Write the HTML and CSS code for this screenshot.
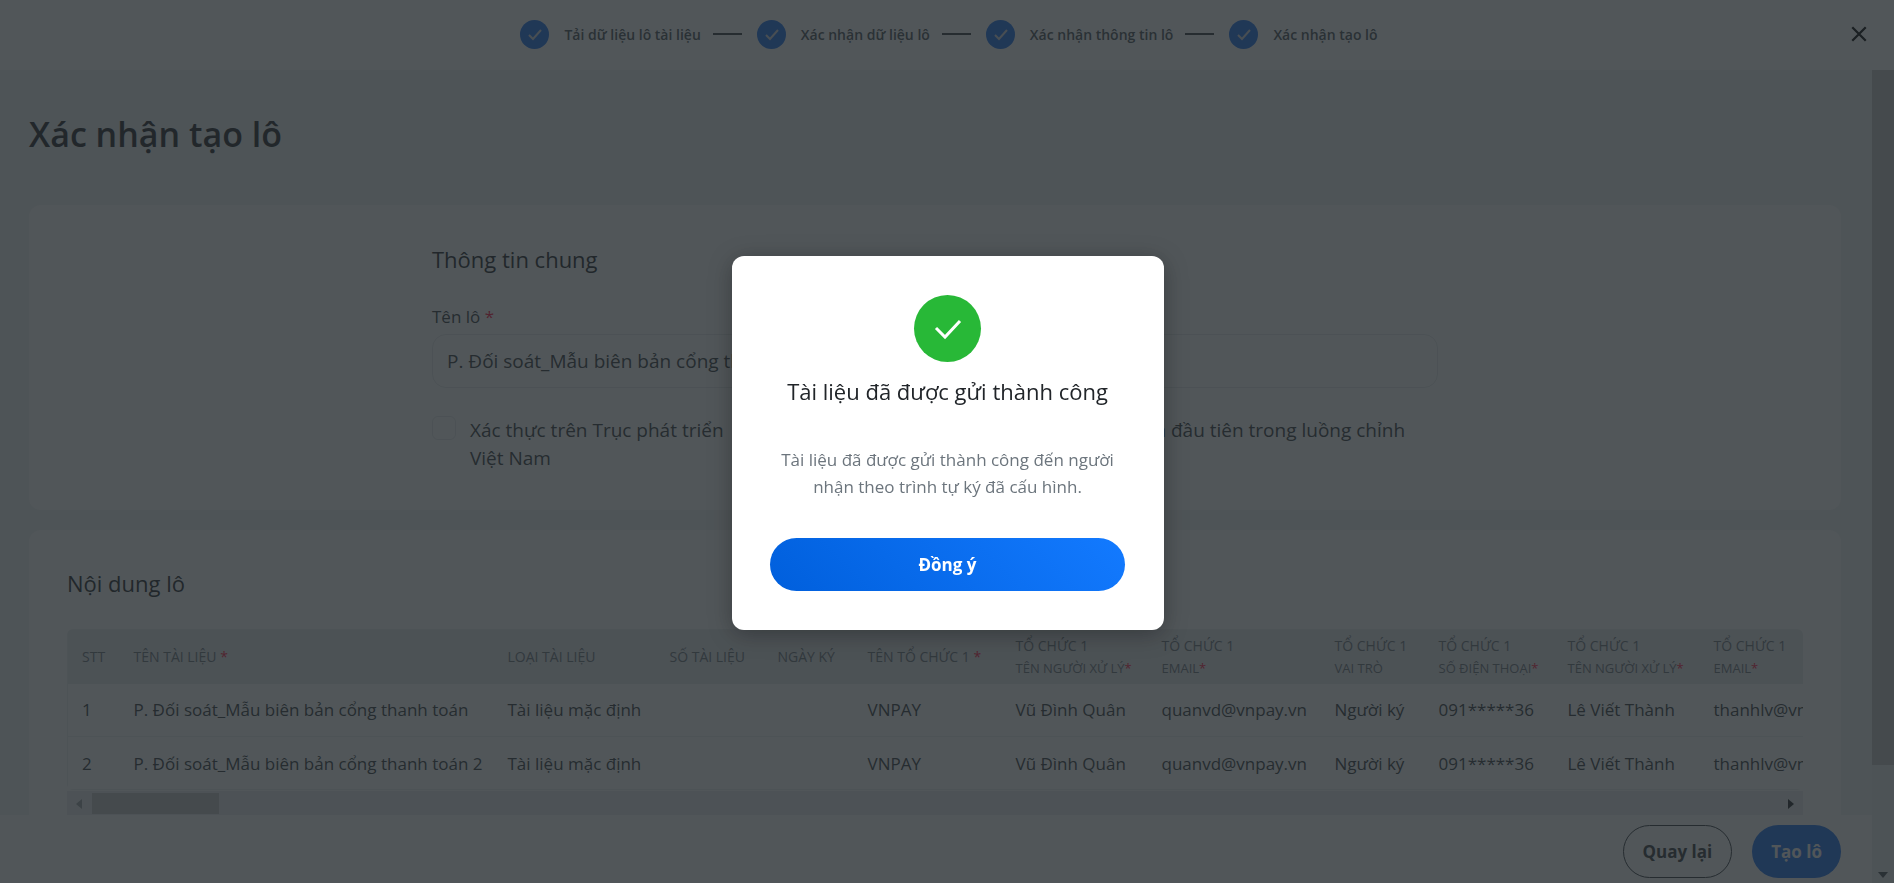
FILE: index.html
```html
<!DOCTYPE html>
<html lang="vi">
<head>
<meta charset="utf-8">
<title>Xác nhận tạo lô</title>
<link rel="stylesheet" href="styles.css">
</head>
<body>
<div class="app">
  <header class="topbar">
    <ol class="steps">
      <li class="step"><span class="dot"><svg viewBox="0 0 29 29"><path d="M9 15l4 4 8-9"/></svg></span><span>Tải dữ liệu lô tài liệu</span></li>
      <li class="step"><span class="dot"><svg viewBox="0 0 29 29"><path d="M9 15l4 4 8-9"/></svg></span><span>Xác nhận dữ liệu lô</span></li>
      <li class="step"><span class="dot"><svg viewBox="0 0 29 29"><path d="M9 15l4 4 8-9"/></svg></span><span>Xác nhận thông tin lô</span></li>
      <li class="step"><span class="dot"><svg viewBox="0 0 29 29"><path d="M9 15l4 4 8-9"/></svg></span><span>Xác nhận tạo lô</span></li>
    </ol>
    <button class="close" type="button" aria-label="Đóng"><svg viewBox="0 0 16 16"><path d="M2 2l12 12M14 2L2 14"/></svg></button>
  </header>
  <div class="body">
    <div class="column">
      <main class="content">
        <h1>Xác nhận tạo lô</h1>
        <section class="card">
          <div class="form">
            <h2>Thông tin chung</h2>
            <label class="label" for="batch">Tên lô <span class="req">*</span></label>
            <input class="field" id="batch" type="text" value="P. Đối soát_Mẫu biên bản cổng thanh toán">
            <div class="checks">
              <div class="check"><input type="checkbox" id="c1"><label for="c1">Xác thực trên Trục phát triển &nbsp;Hợp đồng điện tử Việt&nbsp;Nam</label></div>
              <div class="check"><input type="checkbox" id="c2"><label for="c2">Bỏ qua bước ký của đầu tiên trong luồng chỉnh</label></div>
            </div>
          </div>
        </section>
        <section class="card list">
          <h2>Nội dung lô</h2>
          <div class="scroller">
            <table>
              <colgroup><col class="w-no"><col class="w-name"><col class="w-type"><col class="w-num"><col class="w-date"><col class="w-org"><col class="w-person"><col class="w-mail"><col class="w-role"><col class="w-phone"><col class="w-person"><col class="w-mail"></colgroup>
              <thead>
                <tr>
                  <th>STT</th><th>TÊN TÀI LIỆU <span class="req">*</span></th><th>LOẠI TÀI LIỆU</th><th>SỐ TÀI LIỆU</th><th>NGÀY KÝ</th><th>TÊN TỔ CHỨC 1 <span class="req">*</span></th>
                  <th>TỔ CHỨC 1<small>TÊN NGƯỜI XỬ LÝ<span class="req">*</span></small></th>
                  <th>TỔ CHỨC 1<small>EMAIL<span class="req">*</span></small></th>
                  <th>TỔ CHỨC 1<small>VAI TRÒ</small></th>
                  <th>TỔ CHỨC 1<small>SỐ ĐIỆN THOẠI<span class="req">*</span></small></th>
                  <th>TỔ CHỨC 1<small>TÊN NGƯỜI XỬ LÝ<span class="req">*</span></small></th>
                  <th>TỔ CHỨC 1<small>EMAIL<span class="req">*</span></small></th>
                </tr>
              </thead>
              <tbody>
                <tr><td>1</td><td>P. Đối soát_Mẫu biên bản cổng thanh toán</td><td>Tài liệu mặc định</td><td></td><td></td><td>VNPAY</td><td>Vũ Đình Quân</td><td>quanvd@vnpay.vn</td><td>Người ký</td><td>091*****36</td><td>Lê Viết Thành</td><td>thanhlv@vnpay.vn</td></tr>
                <tr><td>2</td><td>P. Đối soát_Mẫu biên bản cổng thanh toán 2</td><td>Tài liệu mặc định</td><td></td><td></td><td>VNPAY</td><td>Vũ Đình Quân</td><td>quanvd@vnpay.vn</td><td>Người ký</td><td>091*****36</td><td>Lê Viết Thành</td><td>thanhlv@vnpay.vn</td></tr>
              </tbody>
            </table>
          </div>
          <div class="hbar">
            <svg class="arrow faint" viewBox="0 0 6 10"><path d="M6 0v10L0 5z"/></svg>
            <span class="hthumb"></span>
            <svg class="arrow" viewBox="0 0 6 10"><path d="M0 0v10l6-5z"/></svg>
          </div>
        </section>
      </main>
      <footer class="footer">
        <button class="btn outline" type="button">Quay lại</button>
        <button class="btn solid" type="button">Tạo lô</button>
      </footer>
    </div>
    <div class="vbar">
      <span class="vthumb"></span>
      <svg viewBox="0 0 10 6"><path d="M0 0h10L5 6z"/></svg>
    </div>
  </div>
</div>
<div class="overlay">
  <div class="modal" role="dialog" aria-modal="true" aria-labelledby="done">
    <span class="success"><svg viewBox="0 0 67 67"><path d="M22 33l9 9 15-16"/></svg></span>
    <h2 id="done">Tài liệu đã được gửi thành công</h2>
    <p>Tài liệu đã được gửi thành công đến người nhận theo trình tự ký đã cấu hình.</p>
    <button class="ok" type="button">Đồng ý</button>
  </div>
</div>
</body>
</html>
```

FILE: styles.css
```css
* { box-sizing: border-box; }
body {
  margin: 0;
  font-family: "Open Sans", "Noto Sans", sans-serif;
  font-size: 17px;
  color: #212529;
  overflow: hidden;
}
button, input { font-family: inherit; }
h1, h2, p, ol { margin: 0; padding: 0; }
h1 { font-weight: 600; }
h2 { font-weight: 500; }
svg { display: block; }
.app { display: flex; flex-direction: column; height: 100vh; background: #fff; }

.topbar { display: flex; align-items: center; height: 70px; padding: 0 26px 2px; flex: none; }
.steps { display: flex; align-items: center; margin-left: auto; list-style: none; font-size: 14px; font-weight: 600; color: #495057; }
.step { display: flex; align-items: center; gap: 15px; }
.step + .step::before { content: ""; width: 29px; height: 2px; margin-left: 12px; background: #343a40; }
.dot { width: 29px; height: 29px; border-radius: 50%; background: #1a70f0; }
.dot path { fill: none; stroke: #d5dae0; stroke-width: 2; }
.close { margin-left: auto; padding: 0; border: 0; background: none; width: 18px; height: 18px; }
.topbar::before { content: ""; width: 22px; }
.close path { stroke: #000; stroke-width: 2; }

.body { display: flex; flex: 1; min-height: 0; }
.column { display: flex; flex-direction: column; flex: 1; min-width: 0; }
.content { flex: 1; min-height: 0; overflow: hidden; padding: 38px 31px 0 29px; background: #f2f3f3; }
h1 { font-size: 34px; line-height: 52px; margin-bottom: 45px; }
h2 { font-size: 22px; line-height: 32px; }
.card { border-radius: 12px; background: #fff; padding: 38px; margin-bottom: 20px; }
.form { max-width: 1006px; margin: 0 auto; }
.form h2 { margin-bottom: 30px; }
.label { display: block; line-height: 24px; margin-bottom: 5px; color: #343a40; }
.req { color: #ff1040; }
.field { display: block; width: 100%; height: 54px; padding: 0 14px; border: 1px solid #e6e8ea; border-radius: 14px; background: #fff; font-size: 19px; color: #343a40; }
.checks { display: grid; grid-template-columns: 1fr 1fr; gap: 40px; margin-top: 28px; font-size: 19px; line-height: 28px; color: #343a40; }
.check { display: flex; gap: 14px; align-items: flex-start; }
.check input { appearance: none; flex: none; width: 24px; height: 24px; margin: 0; border: 1px solid #e6e8ea; border-radius: 6px; }

.list { min-height: 320px; padding-top: 37px; }
.list h2 { margin-bottom: 30px; }
.scroller { overflow: hidden; border-radius: 6px; margin-bottom: 1px; }
table { table-layout: fixed; width: 1806px; border-collapse: collapse; border: 1px solid #eceef0; }
th { height: 54px; padding: 0 14px; text-align: left; font-size: 14px; font-weight: 500; line-height: 22px; color: #6c757d; background: #e8eaec; white-space: nowrap; }
th small { display: block; font-size: 13px; }
td { height: 53px; padding: 0 14px; border-bottom: 1px solid #eceef0; color: #343a40; white-space: nowrap; }
.w-no { width: 52px; }
.w-name { width: 374px; }
.w-type { width: 162px; }
.w-num { width: 108px; }
.w-date { width: 90px; }
.w-org { width: 148px; }
.w-person { width: 146px; }
.w-mail { width: 173px; }
.w-role { width: 104px; }
.w-phone { width: 129px; }
.hbar { display: flex; align-items: center; height: 25px; padding: 0 9px; background: #ebedee; }
.arrow { width: 6px; height: 10px; fill: #212529; }
.faint { fill: #9a9fa3; }
.hthumb { width: 127px; height: 21px; margin: 0 auto 0 10px; background: #c4c6c8; }

.footer { display: flex; justify-content: flex-end; align-items: center; gap: 20px; height: 68px; padding: 5px 31px 0 0; background: #fff; }
.btn { height: 53px; padding: 0 19px; border-radius: 27px; font-size: 17px; font-weight: 700; }
.outline { border: 1px solid #343a40; background: #fff; color: #343a40; }
.solid { border: 0; background: #1a70f0; color: #fff; }
.vbar { display: flex; flex-direction: column; align-items: center; justify-content: space-between; width: 22px; padding-bottom: 5px; background: #eceeef; }
.vthumb { width: 100%; height: 695px; background: #c4c6c8; }
.vbar svg { width: 10px; height: 6px; fill: #495057; }

.overlay { position: fixed; inset: 0; display: flex; align-items: center; justify-content: center; padding: 2px 0 0 2px; background: rgba(34, 40, 44, .79); }
.modal { display: flex; flex-direction: column; align-items: center; width: 432px; padding: 39px 39px 39px 38px; border-radius: 12px; background: #fff; text-align: center; box-shadow: 0 4px 24px rgba(0, 0, 0, .3); }
.success { width: 67px; height: 67px; border-radius: 50%; background: #28b837; }
.success path { fill: none; stroke: #fff; stroke-width: 3; }
.modal h2 { margin: 13px 0 39px; white-space: nowrap; }
.modal p { line-height: 27px; color: #6c757d; margin-bottom: 38px; }
.ok { width: 100%; height: 53px; border: 0; border-radius: 27px; background: linear-gradient(45deg, #005fdc, #137aff); color: #fff; font-size: 17px; font-weight: 700; }
```
